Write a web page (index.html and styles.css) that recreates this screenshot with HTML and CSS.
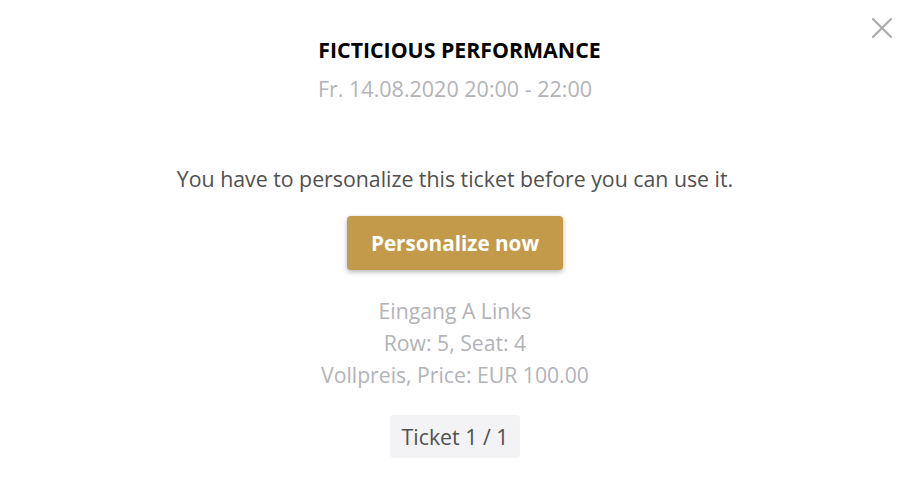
FILE: index.html
```html
<!DOCTYPE html>
<html>
<head>
<meta charset="utf-8">
<link rel="stylesheet" href="styles.css">
</head>
<body>
<div class="modal">
  <button class="close" aria-label="Close">
    <svg width="22" height="22" viewBox="0 0 22 22"><path d="M2 2 L20 20 M20 2 L2 20" stroke="#ababaf" stroke-width="2.2" stroke-linecap="round" fill="none"/></svg>
  </button>
  <h1 class="title">FICTICIOUS PERFORMANCE</h1>
  <div class="date">Fr. 14.08.2020 20:00 - 22:00</div>
  <p class="message">You have to personalize this ticket before you can use it.</p>
  <button class="btn">Personalize now</button>
  <div class="details">
    <div>Eingang A Links</div>
    <div>Row: 5, Seat: 4</div>
    <div>Vollpreis, Price: EUR 100.00</div>
  </div>
  <div class="chip">Ticket 1 / 1</div>
</div>
</body>
</html>
```
FILE: styles.css
```css
html, body {
  margin: 0;
  padding: 0;
  background: #fff;
}
body {
  font-family: "Open Sans", sans-serif;
  width: 910px;
  height: 479px;
  overflow: hidden;
}
.modal {
  position: relative;
  display: flex;
  flex-direction: column;
  align-items: center;
  padding-top: 36px;
}
.close {
  position: absolute;
  top: 17px;
  right: 17px;
  border: 0;
  background: none;
  padding: 0;
  width: 22px;
  height: 22px;
}
.title {
  margin: 0;
  padding-left: 9px;
  font-size: 21.3px;
  font-weight: 700;
  color: #000;
  line-height: 28px;
  letter-spacing: 0;
}
.date {
  margin-top: 12px;
  font-size: 21.5px;
  color: #b3b3b8;
  line-height: 26px;
}
.message {
  margin: 64px 0 0;
  font-size: 21.3px;
  color: #505050;
  line-height: 26px;
}
.btn {
  margin-top: 24px;
  width: 216px;
  height: 54px;
  border: 0;
  border-radius: 4px;
  background: #c39a4a;
  color: #fff;
  font-family: "Open Sans", sans-serif;
  font-size: 20.7px;
  font-weight: 700;
  box-shadow: 0 2px 5px rgba(0,0,0,0.3);
}
.details {
  margin-top: 25px;
  display: flex;
  flex-direction: column;
  align-items: center;
  font-size: 21.2px;
  line-height: 32px;
  color: #b3b3b8;
}
.chip {
  margin-top: 24px;
  padding: 0 12px;
  height: 43px;
  line-height: 43px;
  background: #f3f3f5;
  border-radius: 4px;
  font-size: 21.3px;
  color: #505050;
}
```
